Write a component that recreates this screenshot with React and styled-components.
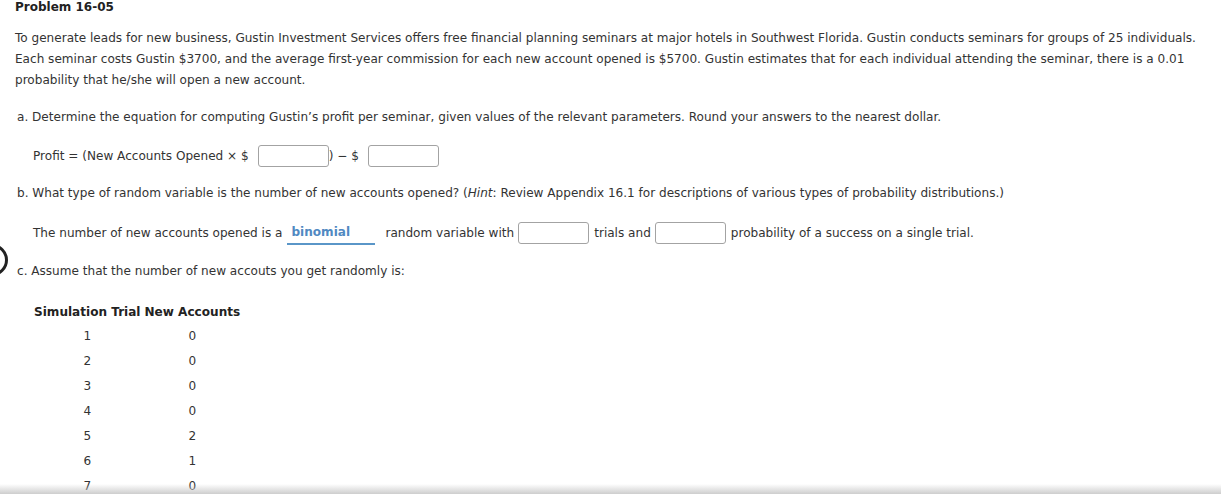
import React from 'react';
import styled, { createGlobalStyle } from 'styled-components';

const GlobalStyle = createGlobalStyle`
    html, body {
        margin: 0;
        padding: 0;
        background: #fff;
        overflow: hidden;
    }
    body {
        font-family: "DejaVu Sans", Verdana, sans-serif;
        font-size: 12.07px;
        color: #333;
    }
`

const Page = styled.div`
    position: relative;
    width: 1221px;
    height: 494px;
    overflow: hidden;
    padding: 0 0 0 15px;
    box-sizing: border-box;
`

const Title = styled.h1`
    margin: 0;
    font-size: 12px;
    line-height: 14px;
    font-weight: bold;
    color: #222;
`

const Intro = styled.p`
    margin: 14px 0 0 0;
    line-height: 21px;
`

const Question = styled.p`
    margin: ${({ top }) => top}px 0 0 2px;
    line-height: 16px;
`

const AnswerRow = styled.div`
    display: flex;
    align-items: center;
    margin: ${({ top }) => top}px 0 0 18px;
    height: 22px;
    white-space: nowrap;
`

const Field = styled.span`
    display: inline-block;
    width: 71px;
    height: 22px;
    box-sizing: border-box;
    border: 1px solid #a3a3a3;
    border-radius: 3px;
    background: #fff;
    margin: 0 ${({ right }) => right || 0}px 0 ${({ left }) => left || 0}px;
`

const Dropdown = styled.span`
    display: inline-block;
    width: 88px;
    margin: 0 10px 0 5px;
    padding: 0 0 3px 4px;
    box-sizing: border-box;
    border-bottom: 2px solid #5a96c8;
    color: #5089c2;
    font-weight: bold;
    line-height: 16px;
    position: relative;
    top: 1px;
`

const Table = styled.table`
    margin: 22px 0 0 17px;
    border-collapse: collapse;
    th, td {
        padding: 0 2px;
        text-align: center;
    }
    th {
        font-weight: bold;
        color: #222;
        height: 22px;
    }
    td {
        height: 25px;
    }
`

const EdgeCircle = styled.div`
    position: absolute;
    left: -24px;
    top: 244px;
    width: 32px;
    height: 32px;
    border: 3px solid #222;
    border-radius: 50%;
    box-sizing: border-box;
`

const BottomShade = styled.div`
    position: absolute;
    left: 0;
    right: 0;
    bottom: 0;
    height: 10px;
    background: linear-gradient(to bottom, rgba(255,255,255,0), rgba(200,200,200,0.9));
`

const rows = [
    [1, 0], [2, 0], [3, 0], [4, 0], [5, 2], [6, 1], [7, 0],
]

export default function App() {
    return (
        <Page>
            <GlobalStyle />
            <Title>Problem 16-05</Title>
            <Intro>
                To generate leads for new business, Gustin Investment Services offers free financial planning seminars at major hotels in Southwest Florida. Gustin conducts seminars for groups of 25 individuals. Each seminar costs Gustin $3700, and the average first-year commission for each new account opened is $5700. Gustin estimates that for each individual attending the seminar, there is a 0.01 probability that he/she will open a new account.
            </Intro>
            <Question top={18}>a. Determine the equation for computing Gustin’s profit per seminar, given values of the relevant parameters. Round your answers to the nearest dollar.</Question>
            <AnswerRow top={20}>
                Profit = (New Accounts Opened × $ <Field left={9} />) − $ <Field left={9} />
            </AnswerRow>
            <Question top={18}>b. What type of random variable is the number of new accounts opened? (<i>Hint</i>: Review Appendix 16.1 for descriptions of various types of probability distributions.)</Question>
            <AnswerRow top={21}>
                The number of new accounts opened is a
                <Dropdown>binomial</Dropdown>
                random variable with
                <Field left={4} right={5} />
                trials and
                <Field left={4} right={5} />
                probability of a success on a single trial.
            </AnswerRow>
            <Question top={19}>c. Assume that the number of new accouts you get randomly is:</Question>
            <Table>
                <thead>
                    <tr>
                        <th>Simulation Trial</th>
                        <th>New Accounts</th>
                    </tr>
                </thead>
                <tbody>
                    {rows.map(([t, n]) => (
                        <tr key={t}>
                            <td>{t}</td>
                            <td>{n}</td>
                        </tr>
                    ))}
                </tbody>
            </Table>
            <EdgeCircle />
            <BottomShade />
        </Page>
    )
}
